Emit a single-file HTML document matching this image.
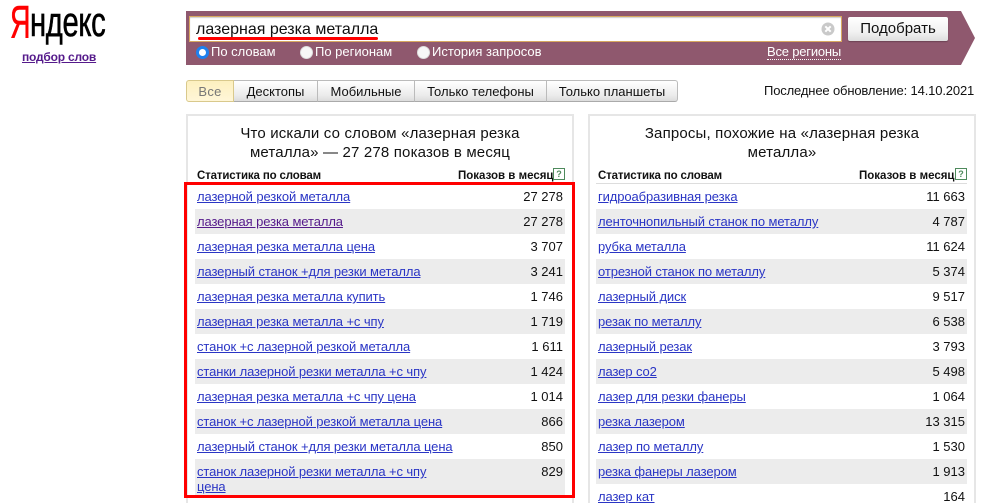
<!DOCTYPE html>
<html lang="ru"><head><meta charset="utf-8"><title>Яндекс подбор слов</title>
<style>
*{box-sizing:border-box}
html,body{margin:0;padding:0;width:990px;height:503px;overflow:hidden;background:#fff}
body{font-family:"Liberation Sans",Arial,sans-serif;color:#000;position:relative}
.a{position:absolute;white-space:nowrap}
.tab{position:absolute;top:80px;height:22px;line-height:21px;font-size:13px;text-align:center;color:#111;background:linear-gradient(#fff,#ececec 70%,#dcdcdc);border:1px solid #bbb;border-left:0;border-bottom:1px solid #aaa}
.panel{position:absolute;top:114px;height:400px;border:2px solid #e6e6e6;background:#fff}
.h{position:absolute;top:170px;font-size:11.5px;font-weight:bold;line-height:13px;white-space:nowrap;color:#111}
.ti{position:absolute;text-align:center;font-size:15px;line-height:19px;color:#111;letter-spacing:.17px}
.q{position:absolute;top:168px;width:12px;height:12px;border:1px solid #4e8a5c;color:#4e8a5c;font-size:9px;font-weight:bold;line-height:10px;text-align:center}
.r{position:absolute;height:25px;font-size:13px;line-height:15px}
.r.g{background:#ececec}
.r a{position:absolute;left:2px;top:5px;color:#2a35c5;text-decoration:underline;width:270px;letter-spacing:-.1px}
.r span{position:absolute;right:2px;top:5px;font-size:13px;line-height:15px;color:#111}
.l{position:absolute;left:195px;width:370px}
.m{position:absolute;left:596px;width:371px}
.rad{position:absolute;top:46px;width:13px;height:13px;border-radius:50%;background:#f7f7f7;border:1px solid #ddd}
.rl{position:absolute;top:44px;font-size:13px;line-height:16px;color:#fff;white-space:nowrap}
</style></head><body>
<div class="a" style="left:10px;top:-3px;font-size:46px;line-height:50px;color:#f00;transform:scaleX(.62);transform-origin:0 0;-webkit-text-stroke:.6px #f00">Я</div>
<div class="a" style="left:30px;top:-1px;font-size:42px;line-height:46px;color:#000;transform:scaleX(.695);transform-origin:0 0;letter-spacing:-.5px;-webkit-text-stroke:.6px #000">ндекс</div>
<div class="a" style="left:22px;top:50px;font-size:12px;font-weight:bold;line-height:15px;color:#551a8b;text-decoration:underline;letter-spacing:-.2px">подбор слов</div>

<svg class="a" style="left:186px;top:11px" width="790" height="54"><path d="M0 0H775L789 27L775 54H0Z" fill="#8f586e"/></svg>
<div class="a" style="left:189px;top:16px;width:653px;height:26px;background:#fff;border:1px solid #d7a860;box-shadow:inset 0 1px 1px #ccc"></div>
<div class="a" style="left:196px;top:19px;font-size:16px;line-height:21px;color:#111">лазерная резка металла</div>
<div class="a" style="left:198px;top:37px;width:180px;height:2.5px;background:#f00;border-radius:2px"></div>
<svg class="a" style="left:821px;top:22px" width="14" height="14"><circle cx="7" cy="7" r="6.5" fill="#c9c9c9"/><path d="M4.3 4.3L9.7 9.7M9.7 4.3L4.3 9.7" stroke="#fff" stroke-width="2"/></svg>
<div class="a" style="left:848px;top:17px;width:100px;height:24px;background:linear-gradient(#fff,#f2f2f2 60%,#dedede);border-radius:2px;box-shadow:0 1px 1px #6d4354;text-align:center;font-size:15px;line-height:23px;color:#111">Подобрать</div>
<div class="rad" style="left:196px;background:#fff;border:3px solid #1e80ee"></div>
<div class="rl" style="left:211px">По словам</div>
<div class="rad" style="left:300px"></div>
<div class="rl" style="left:315px">По регионам</div>
<div class="rad" style="left:417px"></div>
<div class="rl" style="left:432px">История запросов</div>
<div class="rl" style="left:767px;border-bottom:1px dotted #fff;line-height:15px;height:16px;letter-spacing:-.2px">Все регионы</div>

<div class="tab" style="left:186px;width:48px;border:1px solid #d9c98c;border-radius:3px 0 0 3px;background:linear-gradient(#fdf0bf,#fff6d8);color:#777;letter-spacing:.3px">Все</div>
<div class="tab" style="left:234px;width:84px">Десктопы</div>
<div class="tab" style="left:318px;width:97px">Мобильные</div>
<div class="tab" style="left:415px;width:132px">Только телефоны</div>
<div class="tab" style="left:547px;width:131px;border-radius:0 3px 3px 0">Только планшеты</div>
<div class="a" style="left:764px;top:83px;font-size:13px;line-height:16px;color:#111;letter-spacing:-.15px">Последнее обновление: 14.10.2021</div>

<div class="panel" style="left:186px;width:388px"></div>
<div class="panel" style="left:588px;width:388px"></div>

<div class="ti" style="left:196px;width:368px;top:124px">Что искали со словом «лазерная резка<br>металла» — 27 278 показов в месяц</div>
<div class="h" style="left:197px;letter-spacing:-.15px">Статистика по словам</div>
<div class="h" style="left:458px">Показов в месяц</div>
<div class="q" style="left:553px">?</div>
<div class="ti" style="left:597px;width:370px;top:124px">Запросы, похожие на «лазерная резка<br>металла»</div>
<div class="h" style="left:598px;letter-spacing:-.15px">Статистика по словам</div>
<div class="h" style="left:859px">Показов в месяц</div>
<div class="q" style="left:955px">?</div>
<div class="a" style="left:596px;top:183px;width:371px;height:1px;background:#ddd"></div>

<div class="r l" style="top:184px"><a>лазерной резкой металла</a><span>27 278</span></div>
<div class="r l g" style="top:209px"><a style="color:#551a8b">лазерная резка металла</a><span>27 278</span></div>
<div class="r l" style="top:234px"><a>лазерная резка металла цена</a><span>3 707</span></div>
<div class="r l g" style="top:259px"><a>лазерный станок +для резки металла</a><span>3 241</span></div>
<div class="r l" style="top:284px"><a>лазерная резка металла купить</a><span>1 746</span></div>
<div class="r l g" style="top:309px"><a>лазерная резка металла +с чпу</a><span>1 719</span></div>
<div class="r l" style="top:334px"><a>станок +с лазерной резкой металла</a><span>1 611</span></div>
<div class="r l g" style="top:359px"><a>станки лазерной резки металла +с чпу</a><span>1 424</span></div>
<div class="r l" style="top:384px"><a>лазерная резка металла +с чпу цена</a><span>1 014</span></div>
<div class="r l g" style="top:409px"><a>станок +с лазерной резкой металла цена</a><span>866</span></div>
<div class="r l" style="top:434px"><a>лазерный станок +для резки металла цена</a><span>850</span></div>
<div class="r l g" style="top:459px;height:39px"><a>станок лазерной резки металла +с чпу<br>цена</a><span>829</span></div>

<div class="r m" style="top:184px"><a>гидроабразивная резка</a><span>11 663</span></div>
<div class="r m g" style="top:209px"><a>ленточнопильный станок по металлу</a><span>4 787</span></div>
<div class="r m" style="top:234px"><a>рубка металла</a><span>11 624</span></div>
<div class="r m g" style="top:259px"><a>отрезной станок по металлу</a><span>5 374</span></div>
<div class="r m" style="top:284px"><a>лазерный диск</a><span>9 517</span></div>
<div class="r m g" style="top:309px"><a>резак по металлу</a><span>6 538</span></div>
<div class="r m" style="top:334px"><a>лазерный резак</a><span>3 793</span></div>
<div class="r m g" style="top:359px"><a>лазер со2</a><span>5 498</span></div>
<div class="r m" style="top:384px"><a>лазер для резки фанеры</a><span>1 064</span></div>
<div class="r m g" style="top:409px"><a>резка лазером</a><span>13 315</span></div>
<div class="r m" style="top:434px"><a>лазер по металлу</a><span>1 530</span></div>
<div class="r m g" style="top:459px"><a>резка фанеры лазером</a><span>1 913</span></div>
<div class="r m" style="top:484px"><a>лазер кат</a><span>164</span></div>

<div class="a" style="left:184px;top:182px;width:391px;height:316px;border:3px solid #f00"></div>
</body></html>
